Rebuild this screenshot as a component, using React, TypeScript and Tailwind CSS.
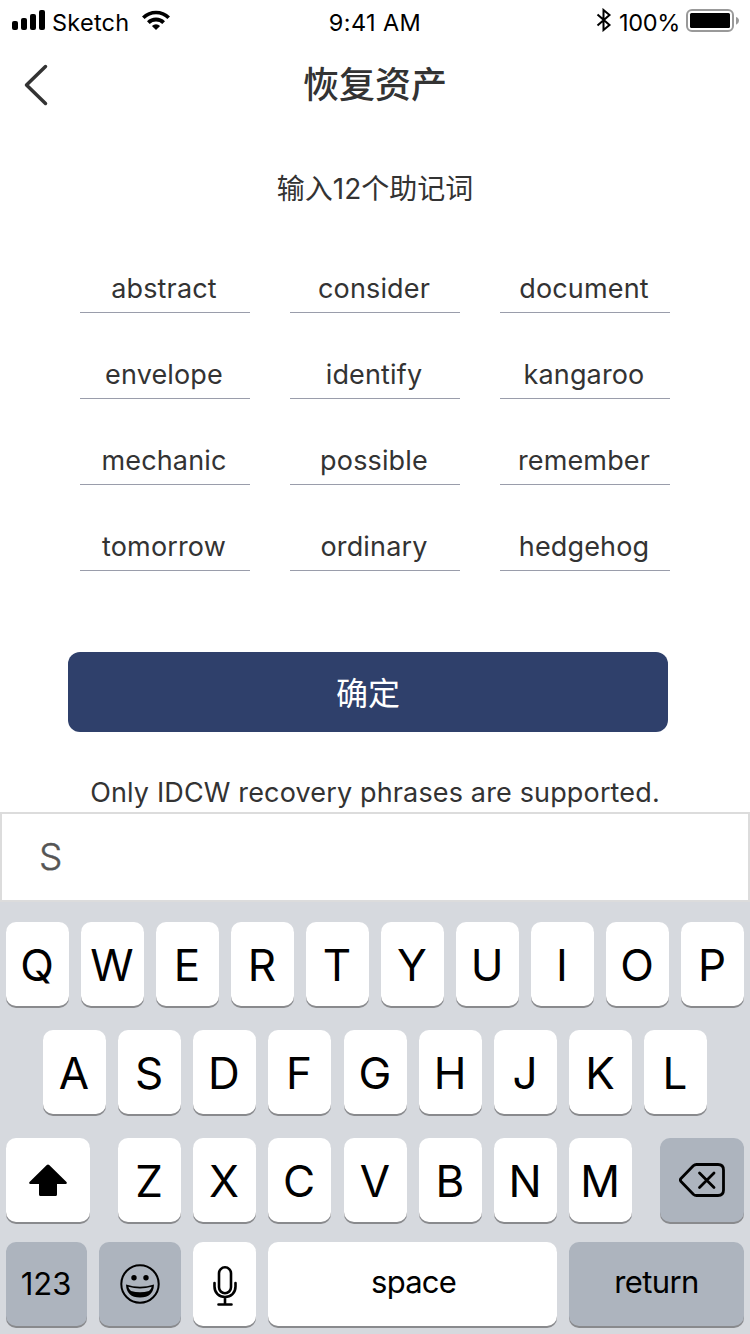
import React from 'react';

const words = [
  'abstract', 'consider', 'document',
  'envelope', 'identify', 'kangaroo',
  'mechanic', 'possible', 'remember',
  'tomorrow', 'ordinary', 'hedgehog',
];

const keyBase = 'flex h-[84px] shrink-0 items-center justify-center rounded-[10px] shadow-[0_2px_0_#898a8d]';

function Key({ children, className = 'w-[63px] bg-white' }: { children: React.ReactNode; className?: string }) {
  return <button className={`${keyBase} ${className}`}>{children}</button>;
}

function Letters({ text }: { text: string }) {
  return (
    <div className="flex gap-3">
      {text.split('').map((c) => (
        <Key key={c}>
          <span className="pr-[1px] pt-[2px] text-[44px] leading-none">{c}</span>
        </Key>
      ))}
    </div>
  );
}

function StatusBar() {
  return (
    <div className="grid h-10 shrink-0 grid-cols-3 items-center text-[23.5px] text-black">
      <div className="flex items-center pl-3">
        <svg width="33" height="20" viewBox="0 0 33 20">
          <rect x="0" y="11" width="6" height="9" rx="2" />
          <rect x="9" y="8" width="6" height="12" rx="2" />
          <rect x="18" y="4" width="6" height="16" rx="2" />
          <rect x="27" y="0" width="6" height="20" rx="2" />
        </svg>
        <span className="ml-[7px] mt-[5px] leading-none tracking-[0.25px]">Sketch</span>
        <svg className="ml-3" width="30" height="20" viewBox="0 0 30 20">
          <path d="M1 6.4A20 20 0 0 1 29 6.4L26.4 9A16.2 16.2 0 0 0 3.6 9Z" />
          <path d="M6 11.2A13 13 0 0 1 24 11.2L21.3 13.9A9.2 9.2 0 0 0 8.7 13.9Z" />
          <path d="M10.9 15.9A6 6 0 0 1 19.1 15.9L15 20Z" />
        </svg>
      </div>
      <div className="mt-[5px] text-center leading-none tracking-[0.4px]">9:41 AM</div>
      <div className="flex items-center justify-end pr-[11px]">
        <svg width="16" height="24" viewBox="0 0 16 24" fill="none" stroke="#000" strokeWidth="2">
          <path d="M1.5 6.5L13.5 17L7.5 22V2L13.5 7L1.5 17.5" />
        </svg>
        <span className="ml-[7px] mt-[5px] leading-none tracking-[-0.3px]">100%</span>
        <svg className="ml-[6px] mt-[2px]" width="53" height="24" viewBox="0 0 53 24">
          <rect x="1" y="1" width="46" height="21" rx="5" fill="none" stroke="#999" strokeWidth="2" />
          <rect x="4" y="4" width="40" height="15" rx="1.5" />
          <path d="M50 8Q53 9 53 11.8Q53 14.5 50 15.8Z" fill="#999" />
        </svg>
      </div>
    </div>
  );
}

export default function App() {
  return (
    <div className="flex h-[1334px] w-[750px] flex-col overflow-hidden bg-white font-['Inter','Noto_Sans_CJK_SC',sans-serif] text-[#333]">
      <StatusBar />
      <header className="grid h-[88px] shrink-0 grid-cols-[1fr_auto_1fr] items-center pt-[2px]">
        <button className="pl-6" aria-label="Back">
          <svg width="24" height="42" viewBox="0 0 24 42" fill="none" stroke="#333" strokeWidth="3.5" strokeLinecap="round" strokeLinejoin="round">
            <path d="M21.5 2.5L2.5 21L21.5 39.5" />
          </svg>
        </button>
        <h1 className="text-[36px] font-medium leading-[50px]">恢复资产</h1>
        <span />
      </header>
      <p className="mt-[41px] h-10 shrink-0 text-center text-[28px] leading-10">输入12个助记词</p>
      <div className="mt-[60px] grid shrink-0 grid-cols-[170px_170px_170px] gap-x-10 gap-y-[42px] pl-20">
        {words.map((word) => (
          <div key={word} className="h-11 border-b border-[#9a9dab] pr-[2px] text-center text-[27px] leading-10 tracking-[0.15px]">
            {word}
          </div>
        ))}
      </div>
      <button className="ml-[68px] mt-[81px] h-20 w-[600px] shrink-0 rounded-[12px] bg-[#2f406b] pt-[3px] text-[32px] text-white">确定</button>
      <p className="mt-[41px] h-[39px] shrink-0 text-center text-[27px] leading-10 tracking-[0.15px]">Only IDCW recovery phrases are supported.</p>
      <div className="flex h-[90px] shrink-0 items-center border-2 border-[#dcdcdc] bg-white pl-[37px] text-[37px] font-light text-[#555] [-webkit-text-stroke:0.4px_#555]">S</div>
      <div className="flex flex-1 flex-col bg-[#d6d9de] px-[6px] pt-5 text-black">
        <Letters text="QWERTYUIOP" />
        <div className="mt-6 flex gap-[13px] pl-[37px]">
          <Letters text="ASDF" />
          <Letters text="GHJKL" />
        </div>
        <div className="mt-6 flex justify-between">
          <Key className="w-[84px] bg-white">
            <svg width="38" height="33" viewBox="0 0 38 33">
              <path d="M17.8 1Q19 0 20.2 1L37.5 18Q38.5 20 36.5 20H28V30.5Q28 32 26.5 32H11.5Q10 32 10 30.5V20H1.5Q-.5 20 .5 18Z" />
            </svg>
          </Key>
          <div className="flex gap-[13px]">
            <Letters text="ZXC" />
            <Letters text="VBNM" />
          </div>
          <Key className="w-[84px] bg-[#adb4be]">
            <svg width="46" height="34" viewBox="0 0 46 34" fill="none" stroke="#000" strokeWidth="2.8" strokeLinecap="round" strokeLinejoin="round">
              <path d="M17.5 1.5H39Q44.5 1.5 44.5 7V27Q44.5 32.5 39 32.5H17.5Q15.7 32.5 14.3 31.2L2 18.5Q.7 17 2 15.5L14.3 2.8Q15.7 1.5 17.5 1.5Z" />
              <path d="M20.5 10L35 24.5M35 10L20.5 24.5" />
            </svg>
          </Key>
        </div>
        <div className="mt-5 flex gap-3 text-[31px]">
          <Key className="w-[81px] bg-[#adb4be]"><span className="pr-[1px]">123</span></Key>
          <Key className="w-[82px] bg-[#adb4be]">
            <svg width="40" height="40" viewBox="0 0 40 40">
              <circle cx="20" cy="20" r="18.7" fill="none" stroke="#000" strokeWidth="2" />
              <circle cx="14" cy="13.7" r="2.7" />
              <circle cx="26" cy="13.7" r="2.7" />
              <path fillRule="evenodd" d="M6 20.5Q20 25 34 20.5Q33.5 33.5 20 33.5Q6.500 33.500 6 20.500ZM8.300 22.800Q9 26 11 27Q20 29.500 29 27Q31 26 31.700 22.800Q20 26 8.300 22.800Z" />
            </svg>
          </Key>
          <Key>
            <svg className="mt-[3px]" width="24" height="40" viewBox="0 0 24 40" fill="none" stroke="#000" strokeWidth="2.6" strokeLinecap="round">
              <rect x="6" y="1.3" width="12" height="26" rx="6" />
              <path d="M1.500 17V20.500C1.500 27 6 31 12 31S22.500 27 22.500 20.500V17M12 31V38.500M5.500 38.500H18.500" />
            </svg>
          </Key>
          <Key className="w-[289px] bg-white"><span className="pb-1 pl-[2px] tracking-[-0.8px]">space</span></Key>
          <Key className="w-[175px] bg-[#adb4be]"><span className="pb-1 tracking-[-0.6px]">return</span></Key>
        </div>
      </div>
    </div>
  );
}
